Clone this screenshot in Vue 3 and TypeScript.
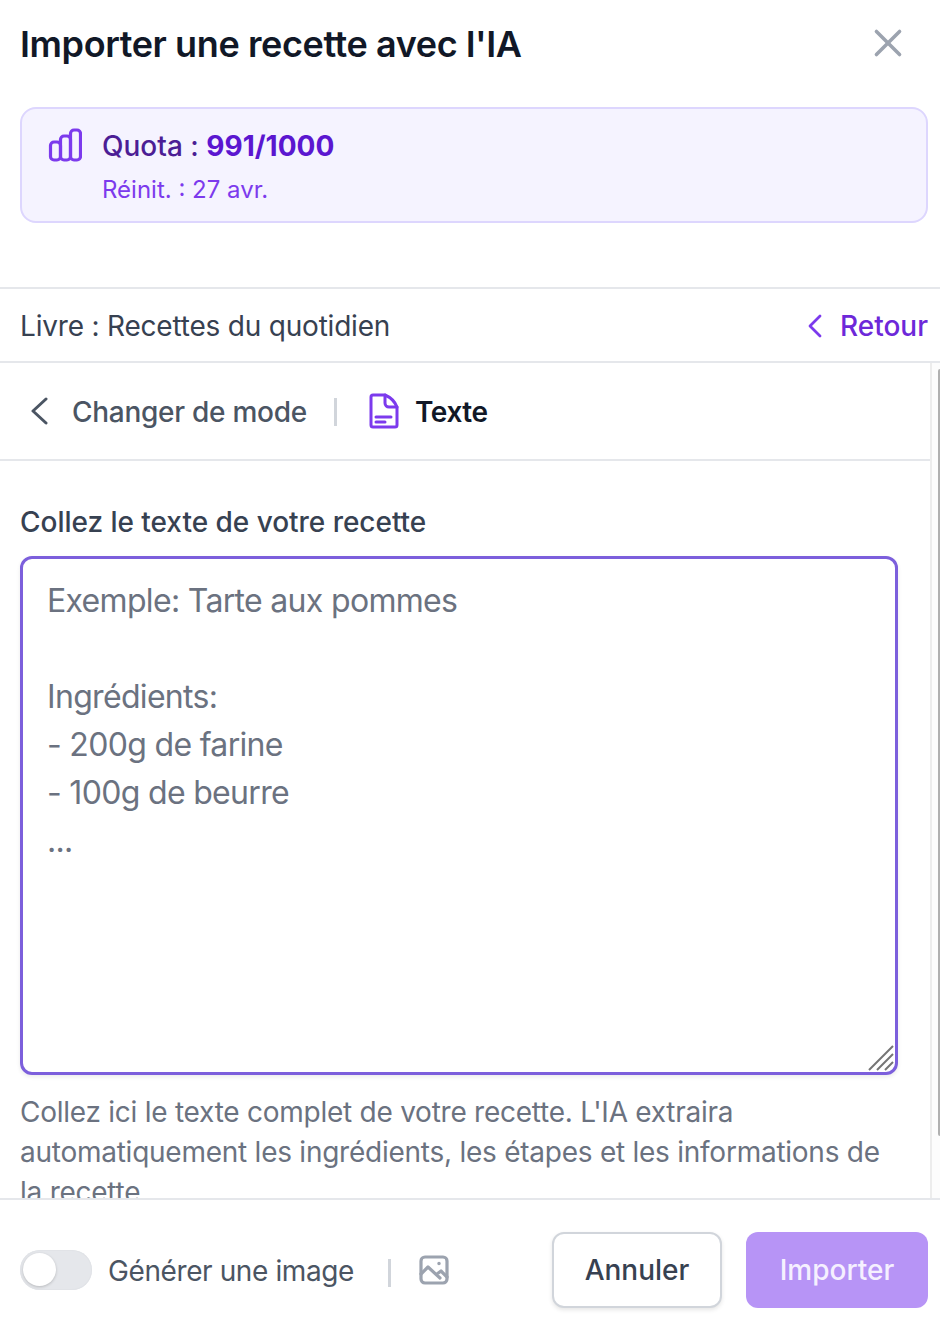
<script setup lang="ts">
const placeholder = "Exemple: Tarte aux pommes\n\nIngrédients:\n- 200g de farine\n- 100g de beurre\n..."
</script>

<template>
  <div class="modal">
    <header class="head">
      <h1>Importer une recette avec l'IA</h1>
      <svg class="close" viewBox="0 0 36 36" fill="none" stroke="#9ca3af" stroke-width="4" stroke-linecap="round"><path d="M5 5l26 26M31 5L5 31"/></svg>
    </header>
    <section class="quota">
      <svg class="bars" viewBox="0 0 34 34" fill="none" stroke="#7c3aed" stroke-width="3.2" stroke-linejoin="round"><rect x="2.5" y="14" width="10" height="18" rx="3.5"/><rect x="12.5" y="8" width="10" height="24" rx="3.5"/><rect x="22.5" y="2" width="10" height="30" rx="3.5"/></svg>
      <div>
        <div class="q1">Quota : <b>991/1000</b></div>
        <div class="q2">Réinit. : 27 avr.</div>
      </div>
    </section>
    <div class="book">
      <span class="book-name">Livre : Recettes du quotidien</span>
      <span class="back"><svg viewBox="0 0 24 24" fill="none" stroke="#7c3aed" stroke-width="2.8" stroke-linecap="round" stroke-linejoin="round"><path d="M17 2L7 12l10 10"/></svg>Retour</span>
    </div>
    <div class="scroller">
      <main class="content">
        <div class="mode">
          <svg class="chev" viewBox="0 0 24 28" fill="none" stroke="#4b5563" stroke-width="3" stroke-linecap="round" stroke-linejoin="round"><path d="M18 2L5 14l13 12"/></svg>
          <span class="change">Changer de mode</span>
          <i class="sep"></i>
          <svg class="doc" viewBox="0 0 30 36" fill="none" stroke="#7c3aed" stroke-width="3" stroke-linejoin="round" stroke-linecap="round"><path d="M4 2h12c7 3 10 7 12 12v18a2 2 0 0 1-2 2H4a2 2 0 0 1-2-2V4a2 2 0 0 1 2-2z"/><path d="M16 2v8a4 4 0 0 0 4 4h8M7 29h9M7 24h15"/></svg>
          <strong>Texte</strong>
        </div>
        <div class="form">
          <label for="txt">Collez le texte de votre recette</label>
          <div class="field">
            <textarea id="txt" :placeholder="placeholder"></textarea>
            <svg class="grip" viewBox="0 0 26 26" fill="none" stroke="#757575" stroke-width="2"><path d="M1 25L25 1M9 25L25 9M17 25l8-8"/></svg>
          </div>
          <p>Collez ici le texte complet de votre recette. L'IA extraira automatiquement les ingrédients, les étapes et les informations de la recette.</p>
        </div>
      </main>
      <div class="track"><div class="thumb"></div></div>
    </div>
    <footer class="foot">
      <span class="switch"><span class="knob"></span></span>
      <span class="gen">Générer une image</span>
      <i class="sep sep2"></i>
      <svg class="pic" viewBox="0 0 32 32" fill="none" stroke="#9ca3af" stroke-width="3.2" stroke-linecap="round" stroke-linejoin="round"><rect x="3" y="3" width="26" height="26" rx="4"/><path d="M3 20l7-7 12 11M19 20l4-3 6 6"/><circle cx="21" cy="9.5" r="1" fill="#9ca3af" stroke-width="1.5"/></svg>
      <button class="cancel">Annuler</button>
      <button class="import">Importer</button>
    </footer>
  </div>
</template>

<style>
body { margin: 0; background: #fff; }
</style>

<style scoped>
.modal { width: 940px; height: 1324px; display: flex; flex-direction: column; overflow: hidden; font-family: Inter, "Liberation Sans", sans-serif; background: #fff; color: #111827; }
.head { height: 107px; flex: none; display: flex; justify-content: space-between; align-items: flex-start; padding: 22px 36px 0 20px; box-sizing: border-box; }
h1 { margin: 0; font-size: 36px; line-height: 44px; font-weight: 600; letter-spacing: -0.4px; }
.close { width: 32px; height: 32px; margin-top: 5px; }
.quota { flex: none; margin: 0 12px 0 20px; height: 116px; box-sizing: border-box; border: 2px solid #ddd6fe; border-radius: 16px; background: #f5f3ff; display: flex; padding: 15px 26px; gap: 20px; }
.bars { width: 34px; height: 34px; margin-top: 4px; }
.q1 { font-size: 28px; line-height: 44px; font-weight: 500; color: #4c1d95; }
.q1 b { font-weight: 700; color: #5b16d0; }
.q2 { font-size: 24px; line-height: 40px; color: #7c3aed; margin-top: 2px; }
.book { flex: none; margin-top: 64px; height: 76px; box-sizing: border-box; border-top: 2px solid #e5e7eb; border-bottom: 2px solid #e5e7eb; display: flex; justify-content: space-between; align-items: center; padding: 2px 12px 0 20px; }
.book-name { font-size: 28px; color: #374151; letter-spacing: -0.2px; }
.back { display: flex; align-items: center; gap: 13px; font-size: 28px; font-weight: 500; color: #6d28d9; }
.back svg { width: 24px; height: 24px; }
.scroller { flex: 1; min-height: 0; display: flex; overflow: hidden; border-bottom: 2px solid #e5e7eb; }
.content { flex: 1; min-width: 0; overflow: hidden; }
.track { width: 10px; flex: none; border-left: 2px solid #ececec; background: #fcfcfc; padding-top: 6px; box-sizing: border-box; display: flex; justify-content: flex-end; align-items: flex-start; }
.thumb { width: 2px; height: 767px; border-radius: 2px 0 0 2px; background: #b0b0b0; }
.mode { height: 98px; box-sizing: border-box; border-bottom: 2px solid #e5e7eb; display: flex; align-items: center; padding: 0 20px 0 28px; }
.chev { width: 24px; height: 28px; }
.change { margin-left: 20px; font-size: 28px; line-height: 36px; margin-top: 2px; font-weight: 500; color: #4b5563; letter-spacing: -0.27px; }
.sep { display: block; width: 3px; height: 28px; background: #d1d5db; }
.mode .sep { margin: 2px 32px 0 27px; }
.doc { width: 30px; height: 36px; }
.mode strong { margin-left: 16px; margin-top: 2px; line-height: 36px; font-size: 28px; font-weight: 600; color: #111827; letter-spacing: -0.4px; }
.form { padding: 41px 32px 0 20px; }
label { display: block; font-size: 28px; line-height: 40px; font-weight: 500; color: #374151; letter-spacing: -0.03px; }
.field { position: relative; margin-top: 14px; }
textarea { display: block; box-sizing: border-box; width: 878px; height: 519px; padding: 18px 24px; border: 3px solid #7c5fdc; border-radius: 12px; outline: none; resize: none; font: 400 32px/48px Inter, "Liberation Sans", sans-serif; letter-spacing: -0.68px; color: #111827; background: #fff; box-shadow: 0 2px 4px rgba(0,0,0,.08); }
textarea::placeholder { color: #6b7280; opacity: 1; }
.grip { position: absolute; right: 4px; bottom: 4px; width: 26px; height: 26px; }
p { margin: 17px 0 0; font-size: 28px; line-height: 40px; color: #6b7280; letter-spacing: -0.25px; }
.foot { flex: none; height: 124px; box-sizing: border-box; display: flex; align-items: center; padding: 16px 12px 0 20px; }
.switch { width: 72px; height: 40px; border-radius: 20px; background: #e5e7eb; position: relative; box-shadow: inset 0 0 0 1px #e1e3e7; }
.knob { position: absolute; left: 3px; top: 3px; width: 33px; height: 33px; border-radius: 50%; background: #fff; box-shadow: 0 1px 3px rgba(0,0,0,.2); }
.gen { margin-left: 16px; margin-top: 2px; font-size: 28px; color: #4b5563; letter-spacing: -0.4px; }
.sep2 { margin: 6px 27px 0 34px; }
.pic { width: 32px; height: 32px; }
.cancel, .import { height: 76px; border-radius: 12px; font: 500 28px Inter, "Liberation Sans", sans-serif; }
.cancel { width: 170px; margin-left: auto; background: #fff; border: 2px solid #d1d5db; color: #374151; box-shadow: 0 2px 4px rgba(0,0,0,.1); }
.import { width: 182px; margin-left: 24px; border: 0; background: #b794f6; color: #f5f0ff; }
</style>
